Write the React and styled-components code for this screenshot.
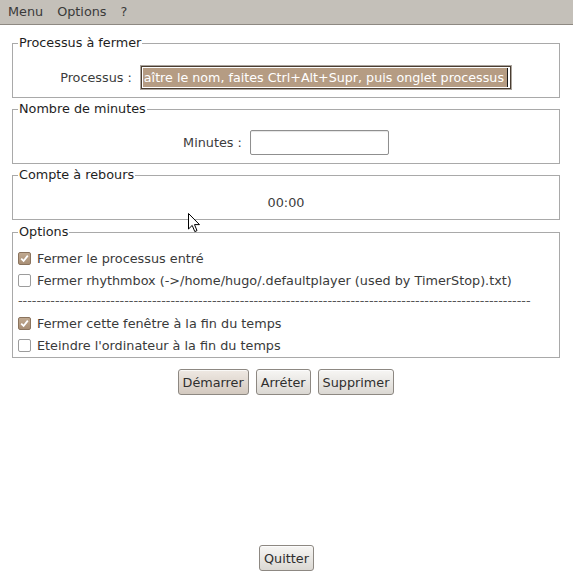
import React from "react"
import styled, { createGlobalStyle } from "styled-components"

const GlobalStyle = createGlobalStyle`
  html, body {
    margin: 0;
    padding: 0;
    background: #ffffff;
  }
  body {
    font-family: "DejaVu Sans", "Liberation Sans", sans-serif;
    font-size: 12.8px;
    color: #333333;
  }
`

const Window = styled.div`
  position: relative;
  display: flex;
  flex-direction: column;
  min-height: 100vh;
  box-sizing: border-box;
`

const MenuBar = styled.div`
  display: flex;
  align-items: center;
  height: 24px;
  padding-left: 1px;
  background: #c4c0b9;
  border-bottom: 1px solid #8e8982;
  color: #3a3a3a;
`

const MenuItem = styled.span`
  padding: 0 7px;
  line-height: 24px;
`

const Content = styled.div`
  display: flex;
  flex-direction: column;
  padding: 11px 13px 0 12px;
`

const Group = styled.fieldset`
  margin: ${p => p.$gap || 0}px 0 0;
  padding: ${p => p.$top}px 5px ${p => p.$bottom}px;
  border: 1px solid #a9a9a9;
  min-inline-size: 0;
`

const Legend = styled.legend`
  padding: 0 1px;
  line-height: 14px;
  color: #1e1e1e;
`

const FieldRow = styled.div`
  display: flex;
  align-items: center;
  justify-content: center;
  gap: 8px;
`

const Label = styled.span`
  color: #3c3c3c;
  white-space: nowrap;
`

const SelectedField = styled.div`
  display: flex;
  align-items: center;
  justify-content: flex-end;
  box-sizing: border-box;
  width: 372px;
  height: 25px;
  padding: 0 3px 0 2px;
  white-space: nowrap;
  border: 1px solid #aaa49d;
  box-shadow: inset 0 0 0 1px #4a3d31;
  background: #ffffff;
`

const Selection = styled.span`
  flex: 1;
  min-width: 0;
  line-height: 19px;
  padding: 0 1px;
  background: #b59c83;
  color: #ffffff;
  font-size: 12.7px;
`

const Caret = styled.span`
  flex-shrink: 0;
  width: 1px;
  height: 19px;
  background: #1a1a1a;
`

const TextInput = styled.input`
  box-sizing: border-box;
  width: ${p => p.$width}px;
  height: 25px;
  margin: 0;
  padding: 0 4px;
  font: inherit;
  border: 1px solid #8f8f8f;
  border-radius: 2px;
  box-shadow: inset 0 1px 1px #e4e4e4;
  background: #ffffff;
  outline: none;
`

const Timer = styled.div`
  text-align: center;
  line-height: 14px;
  color: #3c3c3c;
`

const CheckRow = styled.label`
  display: flex;
  align-items: center;
  gap: 6px;
  height: 22px;
  color: #3a3a3a;
  white-space: nowrap;
`

const Box = styled.span`
  display: flex;
  align-items: center;
  justify-content: center;
  flex-shrink: 0;
  box-sizing: border-box;
  width: 13px;
  height: 13px;
  border-radius: 2px;
  border: 1px solid ${p => (p.$checked ? "#8a735d" : "#9c9c9c")};
  background: ${p =>
    p.$checked ? "linear-gradient(#c0a990, #a98f76)" : "#ffffff"};
`

const Separator = styled.div`
  height: 21px;
  line-height: 20px;
  overflow: hidden;
  white-space: nowrap;
  color: #555555;
`

const ButtonRow = styled.div`
  display: flex;
  justify-content: center;
  gap: 7px;
  margin-top: ${p => p.$top || 0}px;
  padding-bottom: ${p => p.$bottom || 0}px;
`

const Button = styled.button`
  height: 26px;
  margin: 0;
  padding: 0 4px;
  font: inherit;
  color: #2e2e2e;
  border: 1px solid #8d8882;
  border-radius: 3px;
  background: ${p =>
    p.$default
      ? "linear-gradient(#efe9e3, #d3c9bf)"
      : "linear-gradient(#f7f6f4, #dbd8d3)"};
  box-shadow: inset 0 1px 0 rgba(255, 255, 255, 0.7);
`

const Footer = styled(ButtonRow)`
  margin-top: auto;
`

const Cursor = styled.svg`
  position: absolute;
  left: 188px;
  top: 213px;
  pointer-events: none;
`

const Check = ({ checked, children }) => (
  <CheckRow>
    <Box $checked={checked}>
      {checked && (
        <svg width="9" height="9" viewBox="0 0 9 9">
          <path
            d="M1.2 4.6 L3.6 7 L7.8 1.6"
            fill="none"
            stroke="#ffffff"
            strokeWidth="1.8"
          />
        </svg>
      )}
    </Box>
    {children}
  </CheckRow>
)

const options = [
  { label: "Fermer le processus entré", checked: true },
  {
    label: "Fermer rhythmbox (->/home/hugo/.defaultplayer (used by TimerStop).txt)",
    checked: false,
  },
  { sep: true },
  { label: "Fermer cette fenêtre à la fin du temps", checked: true },
  { label: "Eteindre l'ordinateur à la fin du temps", checked: false },
]

export default function App() {
  return (
    <Window>
      <GlobalStyle />
      <MenuBar>
        <MenuItem>Menu</MenuItem>
        <MenuItem>Options</MenuItem>
        <MenuItem>?</MenuItem>
      </MenuBar>

      <Content>
        <Group $top={15} $bottom={7}>
          <Legend>Processus à fermer</Legend>
          <FieldRow>
            <Label>Processus :</Label>
            <SelectedField>
              <Selection>
                aître le nom, faites Ctrl+Alt+Supr, puis onglet processus
              </Selection>
              <Caret />
            </SelectedField>
          </FieldRow>
        </Group>

        <Group $gap={4} $top={14} $bottom={8}>
          <Legend>Nombre de minutes</Legend>
          <FieldRow>
            <Label>Minutes :</Label>
            <TextInput $width={139} defaultValue="" />
          </FieldRow>
        </Group>

        <Group $gap={4} $top={14} $bottom={9}>
          <Legend>Compte à rebours</Legend>
          <Timer>00:00</Timer>
        </Group>

        <Group $gap={5} $top={8} $bottom={1}>
          <Legend>Options</Legend>
          {options.map((o, i) =>
            o.sep ? (
              <Separator key={i}>{"-".repeat(111)}</Separator>
            ) : (
              <Check key={i} checked={o.checked}>
                {o.label}
              </Check>
            )
          )}
        </Group>

        <ButtonRow $top={11}>
          <Button $default>Démarrer</Button>
          <Button>Arréter</Button>
          <Button>Supprimer</Button>
        </ButtonRow>
      </Content>

      <Footer $bottom={17}>
        <Button>Quitter</Button>
      </Footer>

      <Cursor width="13" height="20" viewBox="0 0 13 20">
        <path
          d="M0.5 0.5 L0.5 16 L4.2 12.4 L6.8 18.6 L9 17.6 L6.5 11.6 L11.5 11.6 Z"
          fill="#ffffff"
          stroke="#000000"
          strokeWidth="1"
          strokeLinejoin="round"
        />
      </Cursor>
    </Window>
  )
}
